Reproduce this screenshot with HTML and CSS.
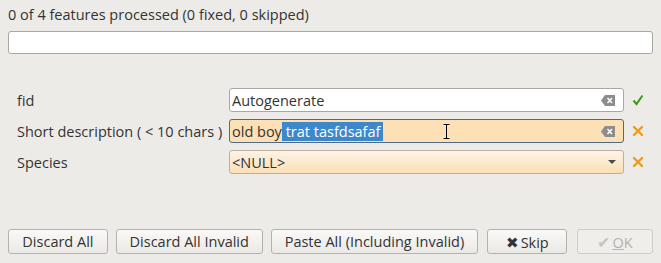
FILE: index.html
```html
<!DOCTYPE html>
<html lang="en">
<head>
    <meta charset="UTF-8">
    <title>Fix Invalid Features</title>
    <link rel="stylesheet" href="styles.css">
</head>
<body>

    <div class="status">0 of 4 features processed (0 fixed, 0 skipped)</div>
    <div class="progress"></div>

    <div class="form">
        <div class="label">fid</div>
        <div class="field">
            <span class="value">Autogenerate</span>
            <svg class="clear" width="14" height="11" viewBox="0 0 14 11">
                <path d="M4 0 H14 V11 H4 L0 5.5 Z" fill="#8d8d8d"/>
                <path d="M6.5 3 L11 8 M11 3 L6.5 8" stroke="#fff" stroke-width="1.4"/>
            </svg>
        </div>
        <div class="state">
            <svg width="12" height="12" viewBox="0 0 12 12">
                <path d="M1.5 6.5 L4.5 10 L10.5 1.5" fill="none" stroke="#3a9a1c" stroke-width="2"/>
            </svg>
        </div>

        <div class="label">Short description ( &lt; 10 chars )</div>
        <div class="field invalid focused">
            <span class="value">old boy<span class="selected"> trat tasfdsafaf</span></span>
            <svg class="clear" width="14" height="11" viewBox="0 0 14 11">
                <path d="M4 0 H14 V11 H4 L0 5.5 Z" fill="#8d8d8d"/>
                <path d="M6.5 3 L11 8 M11 3 L6.5 8" stroke="#fff" stroke-width="1.4"/>
            </svg>
            <svg class="ibeam" width="7" height="15" viewBox="0 0 7 15">
                <path d="M0.5 0.5 H6.5 M3.5 0.5 V14.5 M0.5 14.5 H6.5" fill="none" stroke="#fff" stroke-width="3"/>
                <path d="M0.5 0.5 H6.5 M3.5 0.5 V14.5 M0.5 14.5 H6.5" fill="none" stroke="#000" stroke-width="1.2"/>
            </svg>
        </div>
        <div class="state">
            <svg width="12" height="12" viewBox="0 0 12 12">
                <path d="M2 2 L10 10 M10 2 L2 10" stroke="#f29a17" stroke-width="2.4" stroke-linecap="round"/>
            </svg>
        </div>

        <div class="label">Species</div>
        <div class="field combo">
            <span class="value">&lt;NULL&gt;</span>
            <svg class="arrow" width="8" height="4" viewBox="0 0 8 4">
                <path d="M0 0 H8 L4 4 Z" fill="#4a4a4a"/>
            </svg>
        </div>
        <div class="state">
            <svg width="12" height="12" viewBox="0 0 12 12">
                <path d="M2 2 L10 10 M10 2 L2 10" stroke="#f29a17" stroke-width="2.4" stroke-linecap="round"/>
            </svg>
        </div>
    </div>

    <div class="buttons">
        <button class="btn-discard">Discard All</button>
        <button class="btn-invalid">Discard All Invalid</button>
        <button class="btn-paste">Paste All (Including Invalid)</button>
        <button class="btn-skip"><span class="skip-icon">✖</span>Skip</button>
        <button class="btn-ok" disabled><span class="ok-icon">✔</span><u>O</u>K</button>
    </div>

</body>
</html>
```

FILE: styles.css
```css
body {
    font-family: 'Open Sans', sans-serif;
    font-size: 14.5px;
    color: #333;
    background-color: #edebe7;
    margin: 0;
    padding: 5px 8px 9px 8px;
}

.status {
    height: 20px;
    line-height: 20px;
}

.progress {
    margin-top: 6px;
    height: 21px;
    background-color: #fff;
    border: 1px solid #a9a7a3;
    border-radius: 3px;
}

.form {
    display: grid;
    grid-template-columns: 221px 395px 29px;
    grid-auto-rows: 24px;
    row-gap: 7px;
    margin-top: 34px;
}

.label {
    padding-left: 9px;
    display: flex;
    align-items: center;
    white-space: nowrap;
}

.field {
    position: relative;
    display: flex;
    align-items: center;
    padding: 0 8px 0 2px;
    background-color: #fff;
    border: 1px solid #a9a7a3;
    border-radius: 3px;
    box-sizing: border-box;
}

.field .value {
    flex: 1;
    white-space: nowrap;
}

.field.invalid {
    background-color: #fde0b5;
}

.field.focused {
    border-color: #4f6a82;
}

.field.combo {
    border-color: #bcaf9d;
    background: linear-gradient(#fdf3e6, #fcdfb6);
    padding-right: 7px;
}

.selected {
    background-color: #3d87cb;
    color: #fff;
    padding-right: 3px;
}

.clear {
    flex: none;
}

.arrow {
    flex: none;
}

.ibeam {
    position: absolute;
    left: 213px;
    top: 4px;
}

.state {
    display: flex;
    align-items: center;
    padding-left: 8px;
}

.buttons {
    display: flex;
    margin-top: 55px;
}

button {
    font-family: 'Open Sans', sans-serif;
    font-size: 14.5px;
    color: #333;
    height: 25px;
    padding: 0;
    background: linear-gradient(#faf9f8, #ebe9e5);
    border: 1px solid #b5b2ad;
    border-radius: 3px;
    margin-right: 8px;
}

.btn-discard { width: 100px; }
.btn-invalid { width: 147px; }
.btn-paste { width: 208px; }
.btn-skip { width: 80px; margin-left: 1px; margin-right: 10px; }
.btn-ok { width: 76px; margin-right: 0; }

.skip-icon {
    color: #333;
    font-size: 15px;
    margin-right: 2px;
}

button:disabled {
    color: #b3b1ad;
    background: #efeeeb;
    border-color: #d0cdc8;
}

.ok-icon {
    color: #c7c5c1;
    font-size: 16px;
    margin-right: 2px;
}
```
